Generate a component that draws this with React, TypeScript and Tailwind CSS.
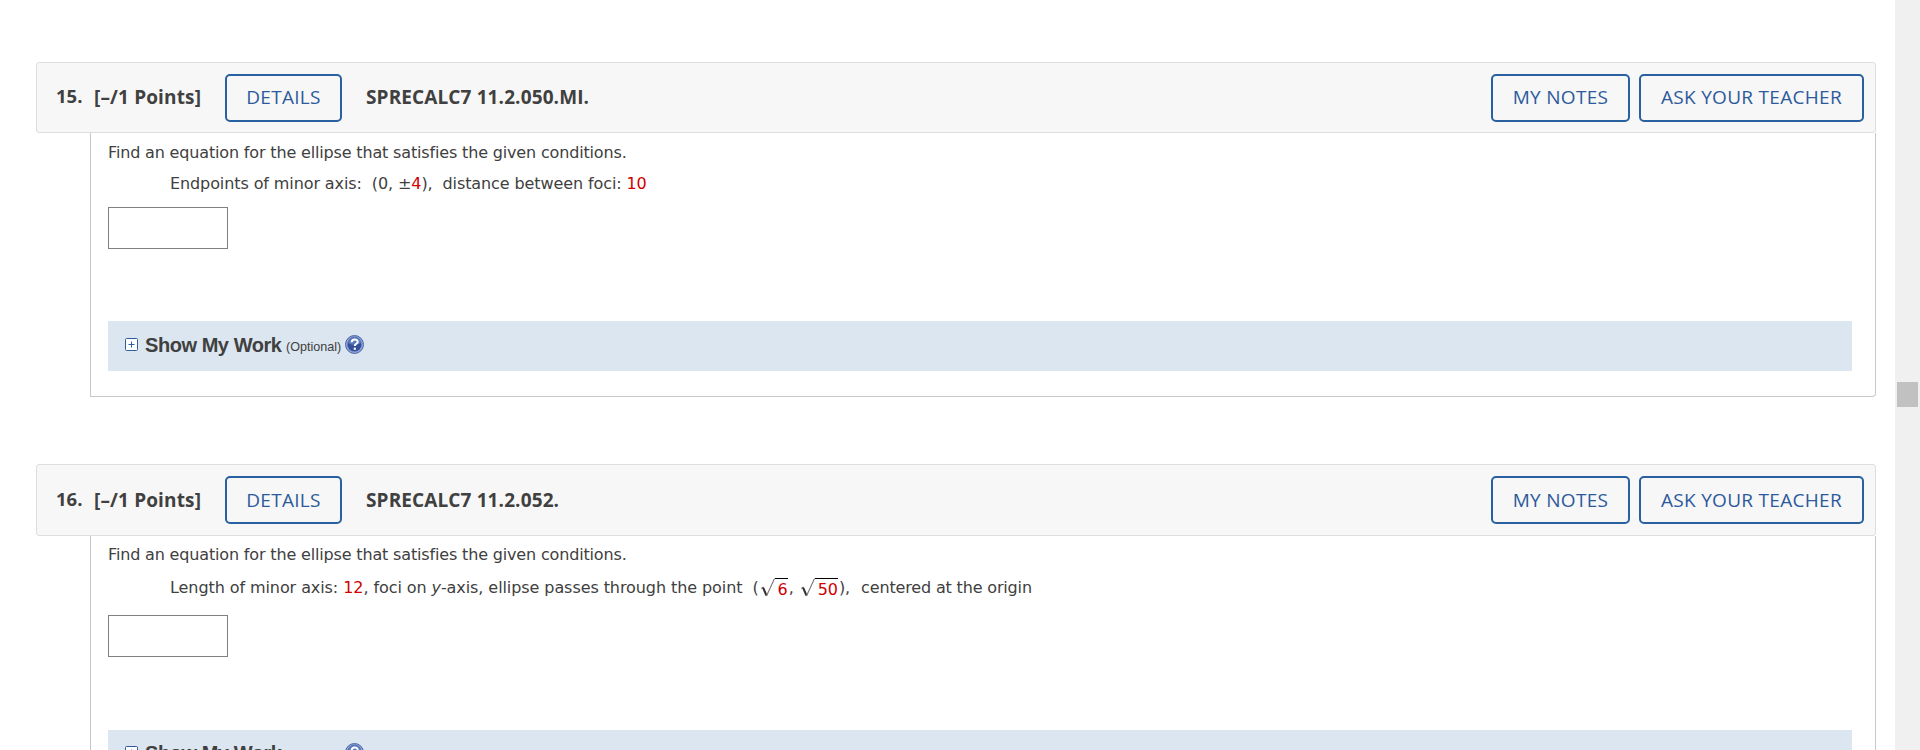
import * as React from "react"

function OutlineButton({ className, children }: { className: string; children: React.ReactNode }) {
  return (
    <button
      className={`h-12 shrink-0 rounded-[5px] border-2 border-[#2960a0] font-['Open_Sans',sans-serif] text-[19px] font-medium tracking-[0.3px] leading-[42px] text-[#2c5a9c] whitespace-nowrap cursor-pointer ${className}`}
    >
      {children}
    </button>
  )
}

function Red({ children }: { children: React.ReactNode }) {
  return <span className="text-[#d00000]">{children}</span>
}

function Sqrt({ children }: { children: React.ReactNode }) {
  return (
    <span className="mx-px inline-flex h-5 items-end align-[-4px]">
      <svg className="h-[19px] w-[15px] shrink-0" viewBox="0 0 15 19" fill="none">
        <path d="M1 10.5 3.2 9" stroke="#777" strokeWidth="1" />
        <path d="M3 9.5 6.5 17.5" stroke="#333" strokeWidth="2" />
        <path d="M6.5 18 14.5 0.5" stroke="#777" strokeWidth="1.1" />
      </svg>
      <span className="h-[19px] border-t border-black pl-[3px] text-[#d00000] leading-[22px]">{children}</span>
    </span>
  )
}

function ShowMyWork({ className }: { className: string }) {
  return (
    <div
      className={`flex h-[50px] w-[1744px] items-start bg-[#dce6f0] pl-[17px] font-['Liberation_Sans',Arial,sans-serif] tracking-normal text-[#404040] ${className}`}
    >
      <svg className="mt-[3px] size-[13px] shrink-0" viewBox="0 0 13 13" fill="none">
        <rect x="0.5" y="0.5" width="12" height="12" rx="1" fill="#fff" stroke="#315b9c" />
        <path d="M3.5 6.5h6M6.5 3.5v6" stroke="#315b9c" />
      </svg>
      <span className="-mt-0.5 ml-[7px] w-[141px] text-[20px] font-bold leading-6 tracking-[-0.45px] whitespace-nowrap">Show My Work</span>
      <span className="mt-1 w-[56px] text-[12.6px] leading-4 whitespace-nowrap">(Optional)</span>
      <svg className="ml-[3px] size-[19px] shrink-0" viewBox="0 0 19 19" fill="none">
        <circle cx="9.5" cy="9.5" r="9" fill="#8da4d2" stroke="#5069a8" />
        <circle cx="9.5" cy="9.5" r="7" fill="#344f9c" />
        <path d="M3 8a6.5 6.5 0 0 1 13 0c-3 2-9 3-13 0Z" fill="#5b78bd" />
        <path d="M6.7 7.2c0-3.6 6-3.5 6-.4 0 2-2.9 1.9-2.9 4.2" stroke="#fff" strokeWidth="2" />
        <path d="M8.7 12.7h2.2v2.1H8.7z" fill="#fff" />
      </svg>
    </div>
  )
}

type HeaderProps = { number: string; code: string; className: string; textClass: string; buttonClass: string }

function QuestionHeader({ number, code, className, textClass, buttonClass }: HeaderProps) {
  return (
    <header
      className={`flex w-[1840px] items-start rounded-[3px] border border-[#dedede] bg-[#f7f7f7] pl-[19px] pr-[11px] pt-[11px] font-['Open_Sans',sans-serif] text-[19px] font-bold text-[#404040] ${className}`}
    >
      <span className={`w-[38px] text-[18.5px] leading-[44px] ${textClass}`}>{number}</span>
      <span className={`w-[131px] tracking-[0.14px] leading-[46px] whitespace-nowrap ${textClass}`}>[–/1 Points]</span>
      <OutlineButton className={`w-[117px] ${buttonClass}`}>DETAILS</OutlineButton>
      <span className={`ml-6 tracking-[0.12px] leading-[46px] whitespace-nowrap ${textClass}`}>{code}</span>
      <div className="ml-auto flex gap-[9px]">
        <OutlineButton className={`w-[139px] ${buttonClass}`}>MY NOTES</OutlineButton>
        <OutlineButton className={`w-[225px] ${buttonClass}`}>ASK YOUR TEACHER</OutlineButton>
      </div>
    </header>
  )
}

const bodyText = "font-['DejaVu_Sans',sans-serif] text-[16px] leading-6 tracking-[-0.16px] text-[#404040] whitespace-pre"

export default function App() {
  return (
    <div className="flex h-[750px] w-full overflow-hidden bg-white">
      <main className="flex-1 pl-9 pt-[62px]">
        <section className="mb-[67px]">
          <QuestionHeader
            number="15."
            code="SPRECALC7 11.2.050.MI."
            className="h-[71px]"
            textClass="pt-0"
            buttonClass="pb-[2px]"
          />
          <div className={`ml-[54px] h-[264px] w-[1786px] rounded-br-[4px] border border-t-0 border-[#c8c8c8] pl-[17px] pt-2 ${bodyText}`}>
            <p>Find an equation for the ellipse that satisfies the given conditions.</p>
            <p className="mt-[7px] pl-[62px] tracking-[-0.1px]">
              Endpoints of minor axis:{"  "}(0, ±<Red>4</Red>),{"  "}distance between foci: <Red>10</Red>
            </p>
            <input className="mt-[11px] block h-[42px] w-[120px] border border-[#808080] bg-white" />
            <div className="mt-[72px]">
              <ShowMyWork className="pt-[14px]" />
            </div>
          </div>
        </section>

        <section>
          <QuestionHeader
            number="16."
            code="SPRECALC7 11.2.052."
            className="h-[72px]"
            textClass="pt-px"
            buttonClass="pb-0"
          />
          <div className={`ml-[54px] h-[264px] w-[1786px] border border-t-0 border-[#c8c8c8] pl-[17px] pt-[7px] ${bodyText}`}>
            <p>Find an equation for the ellipse that satisfies the given conditions.</p>
            <p className="mt-[9px] h-6 pl-[62px] tracking-[-0.08px]">
              Length of minor axis: <Red>12</Red>, foci on <i>y</i>-axis, ellipse passes through the point{"  "}(<Sqrt>6</Sqrt>, <Sqrt>50</Sqrt>),{"  "}
              <span className="ml-px tracking-[-0.16px]">centered at the origin</span>
            </p>
            <input className="mt-[15px] block h-[42px] w-[120px] border border-[#808080] bg-white" />
            <div className="mt-[73px]">
              <ShowMyWork className="pt-[13px]" />
            </div>
          </div>
        </section>
      </main>
      <aside className="w-[25px] shrink-0 bg-[#f0f0f0] px-0.5 pt-[382px]">
        <div className="h-[25px] w-[21px] bg-[#c1c1c1]" />
      </aside>
    </div>
  )
}
